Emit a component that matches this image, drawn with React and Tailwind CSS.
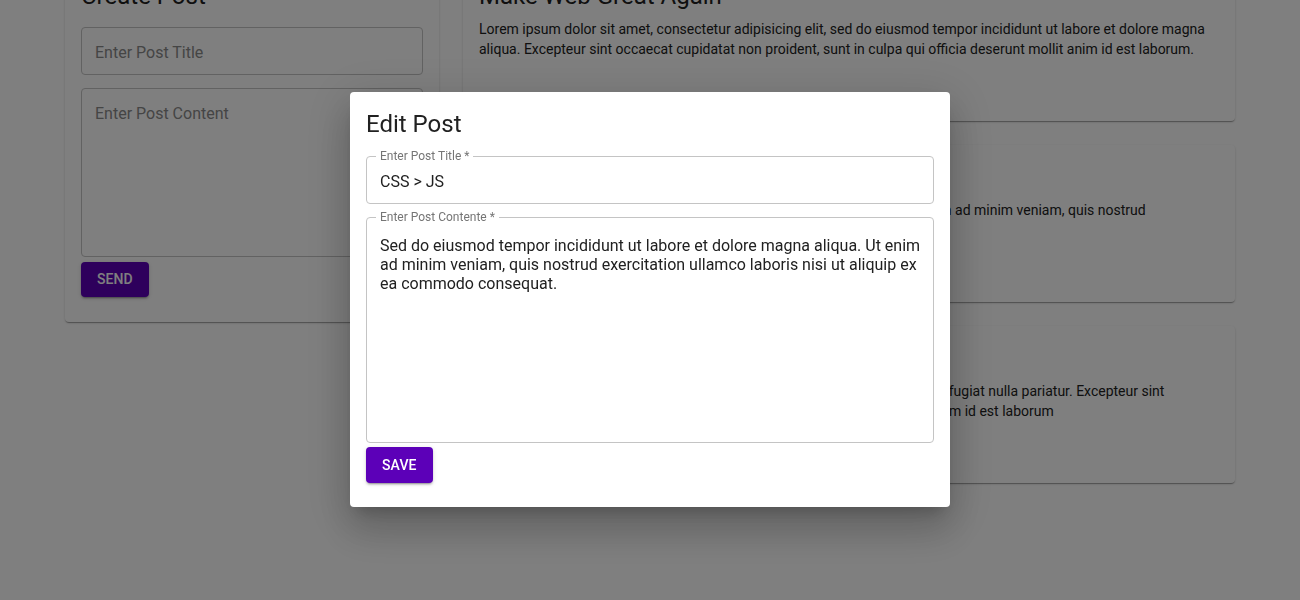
import React from 'react';

const cardShadow =
  'shadow-[0_2px_1px_-1px_rgba(0,0,0,0.2),0_1px_1px_0_rgba(0,0,0,0.14),0_1px_3px_0_rgba(0,0,0,0.12)]';

const buttonShadow =
  'shadow-[0_3px_1px_-2px_rgba(0,0,0,0.2),0_2px_2px_0_rgba(0,0,0,0.14),0_1px_5px_0_rgba(0,0,0,0.12)]';

const posts = [
  {
    title: 'Make Web Great Again',
    body: 'Lorem ipsum dolor sit amet, consectetur adipisicing elit, sed do eiusmod tempor incididunt ut labore et dolore magna aliqua. Excepteur sint occaecat cupidatat non proident, sunt in culpa qui officia deserunt mollit anim id est laborum.'
  },
  {
    title: 'CSS > JS',
    body: 'Sed do eiusmod tempor incididunt ut labore et dolore magna aliqua. Ut enim ad minim veniam, quis nostrud exercitation ullamco laboris nisi ut aliquip ex ea commodo consequat.'
  },
  {
    title: 'Hello World',
    body: 'Duis aute irure dolor in reprehenderit in voluptate velit esse cillum dolore eu fugiat nulla pariatur. Excepteur sint occaecat cupidatat non proident, sunt in culpa qui officia deserunt mollit anim id est laborum'
  }
];

const CreatePost = () => (
  <div className={`bg-white rounded px-4 pt-4 pb-[25px] ${cardShadow}`}>
    <h2 className="text-[24px] leading-[32px] text-[#212121]">Create Post</h2>
    <div className="mt-[15px] h-[48px] border border-[#c4c4c4] rounded px-[13px] pt-[3px] flex items-center text-[16px] text-[#8a8a8a]">
      Enter Post Title
    </div>
    <div className="mt-[13px] h-[169px] border border-[#c4c4c4] rounded px-[13px] pt-[15px] text-[16px] leading-[19px] text-[#8a8a8a]">
      Enter Post Content
    </div>
    <button className={`mt-[5px] h-[35px] px-4 rounded bg-[#5c00b8] text-white text-[14px] font-medium tracking-[0.1px] uppercase ${buttonShadow}`}>
      Send
    </button>
  </div>
);

const PostCard = ({ title, body }) => (
  <div className={`bg-white rounded h-[157px] p-4 ${cardShadow}`}>
    <h2 className="text-[24px] leading-[32px] text-[#212121]">{title}</h2>
    <p className="mt-[7px] text-[14px] leading-[20px] text-[#212121]">{body}</p>
  </div>
);

const EditDialog = () => (
  <div className="fixed inset-0 bg-black/50 flex items-center justify-center pb-px">
    <div className="w-[600px] bg-white rounded px-4 pt-4 pb-6 shadow-[0_11px_15px_-7px_rgba(0,0,0,0.2),0_24px_38px_3px_rgba(0,0,0,0.14),0_9px_46px_8px_rgba(0,0,0,0.12)]">
      <h2 className="text-[24px] leading-[32px] text-[#212121]">Edit Post</h2>

      <fieldset className="mt-[10px] border border-[#c4c4c4] rounded px-[13px] pb-[12px]">
        <legend className="-ml-[4px] px-[4px] text-[12px] leading-[12px] text-[#757575]">
          Enter Post Title *
        </legend>
        <div className="mt-[10px] h-[19px] text-[16px] leading-[19px] text-[#212121]">CSS &gt; JS</div>
      </fieldset>

      <fieldset className="mt-[7px] h-[232px] border border-[#c4c4c4] rounded pl-[13px] pr-[9px]">
        <legend className="-ml-[4px] px-[4px] text-[12px] leading-[12px] text-[#757575]">
          Enter Post Contente *
        </legend>
        <div className="mt-[13px] text-[16px] leading-[19px] text-[#212121]">
          Sed do eiusmod tempor incididunt ut labore et dolore magna aliqua. Ut enim ad minim veniam, quis nostrud
          exercitation ullamco laboris nisi ut aliquip ex ea commodo consequat.
        </div>
      </fieldset>

      <button className={`mt-[4px] h-[36px] px-4 rounded bg-[#5c00b8] text-white text-[14px] font-medium tracking-[0.1px] uppercase ${buttonShadow}`}>
        Save
      </button>
    </div>
  </div>
);

export default function App() {
  return (
    <div className="min-h-[600px] bg-white font-[family-name:Roboto,Helvetica,Arial,sans-serif] overflow-hidden">
      <div className="w-[1170px] mx-auto -mt-[36px] grid grid-cols-[374px_772px] gap-6 items-start">
        <CreatePost />
        <div className="flex flex-col gap-6">
          {posts.map((p) => (
            <PostCard key={p.title} title={p.title} body={p.body} />
          ))}
        </div>
      </div>
      <EditDialog />
    </div>
  );
}
